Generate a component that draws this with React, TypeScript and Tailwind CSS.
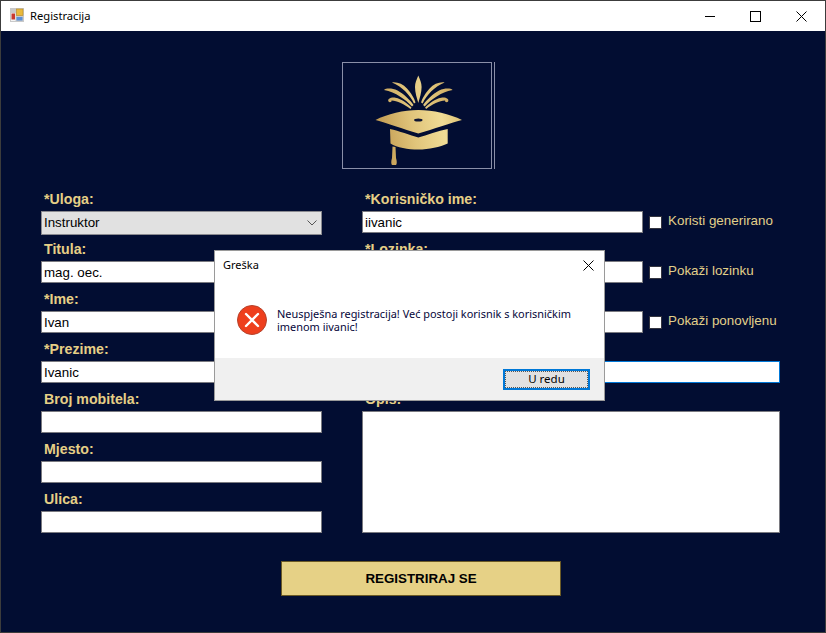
const LABEL = 'font-["Liberation_Sans",Arial,sans-serif] text-[14.2px] font-bold text-[#e6cf86] leading-none';
const UI_FONT = 'font-["Noto_Sans",sans-serif]';
const INPUT =
	'block h-[22px] border border-[#7a7a80] bg-white px-[2px] font-["Liberation_Sans",Arial,sans-serif] text-[13.33px] text-black outline-none';

function Field({ label, children, tall }: { label?: string; children: React.ReactNode; tall?: boolean }) {
	return (
		<div className={tall ? 'h-[150px]' : 'h-[50px]'}>
			<div className={`flex h-[25px] items-center pl-[3px] pt-[2px] ${LABEL}`}>{label}</div>
			{children}
		</div>
	);
}

function TextInput({ value, className = 'w-[281px]' }: { value?: string; className?: string }) {
	return <input readOnly value={value ?? ''} className={`${INPUT} ${className}`} />;
}

function CheckRow({ label, value }: { label: string; value?: string }) {
	return (
		<div className="flex h-[22px] items-center">
			<TextInput value={value} />
			<span className="ml-[6px] h-[13px] w-[13px] border border-[#33343f] bg-white" />
			<span className='ml-[6px] -mt-[2px] font-["Liberation_Sans",Arial,sans-serif] text-[13.4px] text-[#e2d08a]'>{label}</span>
		</div>
	);
}

function AppIcon() {
	return (
		<svg width="14" height="14" viewBox="0 0 14 14" className="-mt-[2px]">
			<rect width="14" height="14" fill="#c9c9c9" />
			<rect x="1" y="5" width="4.5" height="8" fill="#f4f4f4" />
			<rect x="1.5" y="5.5" width="3.5" height="6" fill="#c8392f" />
			<rect x="6.5" y="1" width="6.5" height="6.5" fill="#e9b93c" stroke="#b98a22" strokeWidth="0.6" />
			<rect x="6.5" y="9" width="6" height="3.5" fill="#5b8fd6" />
		</svg>
	);
}

function WindowButtons() {
	return (
		<div className="flex items-center">
			<svg width="10" height="11" viewBox="0 0 10 11" className="mr-[35px]">
				<path d="M0 5.5h10" stroke="#000" strokeWidth="1" />
			</svg>
			<svg width="11" height="11" viewBox="0 0 11 11" className="mr-[35px]">
				<rect x="0.5" y="0.5" width="10" height="10" fill="none" stroke="#000" />
			</svg>
			<svg width="11" height="11" viewBox="0 0 11 11" className="mr-[18px]">
				<path d="M0.5 0.5l10 10M10.5 0.5l-10 10" stroke="#000" />
			</svg>
		</div>
	);
}

function CapLogo() {
	const feathers = (
		<>
			<path d="M72 41.5 C68 33 60 24.5 50 20.5 C55 19.8 61 22 65 26.5 C69 31 72.5 36.5 73.5 40.5 Z" />
			<path d="M70 44.5 C63 37 54 30.5 42 28 C44 26 50 26 55.5 28.5 C62 32 68 38 71.5 43 Z" />
			<path d="M68.5 47 C62.5 42.5 55 38.5 49.5 38.5 C50 40 47.5 41 46.5 39.5 C45 37 49 35 53.5 35.8 C59.5 37 65.5 41.5 69.5 45.5 Z" />
		</>
	);
	return (
		<svg width="148" height="104" viewBox="1 1 148 104">
			<defs>
				<linearGradient id="gold" gradientUnits="userSpaceOnUse" x1="34" y1="60" x2="120" y2="45">
					<stop offset="0" stopColor="#c29b52" />
					<stop offset="0.4" stopColor="#e0c47a" />
					<stop offset="0.75" stopColor="#f0dc96" />
					<stop offset="1" stopColor="#dcc072" />
				</linearGradient>
			</defs>
			<g fill="url(#gold)">
				<path d="M76.3 13.5 C78 17.5 79.6 21 79.6 25 C79.6 31 77.6 36 76.3 41 C75 36 73 31 73 25 C73 21 74.6 17.5 76.3 13.5 Z" />
				{feathers}
				<g transform="matrix(-1 0 0 1 152.6 0)">{feathers}</g>
				<path d="M33.5 58 C45 52 62 48 76.3 48 C91 48 108 52 120 58 C108 61 92 67 76.3 71.5 C61 67 45 61 33.5 58 Z" />
				<path d="M48 67 C57 69 68 73 76.3 75.5 C85 73 96 69 105.7 67 L105.7 81.5 C98 85 87 87.5 76.3 87.5 C66 87.5 55 85.5 48.5 81.5 Z" />
				<path d="M50.5 84.5 L53.5 85 L54 96 C55 99 55 102 54 103 L50 103 C49 102 49 99 50 96 Z" />
			</g>
			<ellipse cx="76.3" cy="58" rx="4.2" ry="1.5" fill="#0c1435" />
		</svg>
	);
}

function ErrorDialog() {
	return (
		<div className={`absolute left-[213px] top-[249px] flex h-[151px] w-[391px] flex-col border border-[#9a9a9a] bg-white ${UI_FONT}`}>
			<div className="flex h-[29px] items-center justify-between pl-[8px] pr-[10px] text-[11px] text-black">
				<span>Greška</span>
				<svg width="11" height="11" viewBox="0 0 11 11">
					<path d="M0.5 0.5l10 10M10.5 0.5l-10 10" stroke="#000" />
				</svg>
			</div>
			<div className="flex h-[78px] items-center pl-[22px]">
				<svg width="30" height="30" viewBox="0 0 30 30" className="mt-[2px] shrink-0">
					<circle cx="15" cy="15" r="14.5" fill="#ee3f1d" stroke="#b5432c" />
					<path d="M9 9l12 12M21 9L9 21" stroke="#fff" strokeWidth="2.4" strokeLinecap="round" />
				</svg>
				<p className="ml-[10px] mt-[2px] w-[320px] text-[10.95px] leading-[13px] text-[#06063a]">
					Neuspješna registracija! Već postoji korisnik s korisničkim imenom iivanic!
				</p>
			</div>
			<div className="flex flex-1 items-center justify-end bg-[#f0f0f0] pr-[14px]">
				<div className="flex h-[21px] w-[87px] items-center justify-center border-2 border-[#0078d7] bg-[#e1e1e1] text-[11.5px] text-black outline-1 -outline-offset-3 outline-dotted outline-[#555]">
					U redu
				</div>
			</div>
		</div>
	);
}

export default function App() {
	return (
		<div className="relative flex h-[633px] w-[826px] flex-col overflow-hidden border border-[#3c3c3c] bg-[#020d32]">
			<div className={`flex h-[30px] items-center justify-between bg-white pl-[9px] ${UI_FONT}`}>
				<div className="flex items-center gap-[6px] text-[11.2px] text-black">
					<AppIcon />
					<span>Registracija</span>
				</div>
				<WindowButtons />
			</div>

			<div className="mt-[31px] flex pl-[341px]">
				<div className="h-[107px] w-[150px] border border-[#8a8fa8]">
					<CapLogo />
				</div>
				<div className="ml-[2px] h-[107px] w-[2px] border-l border-[#8a8fa8]" />
			</div>

			<div className="mt-[17px] flex pl-[40px]">
				<div className="w-[281px]">
					<Field label="*Uloga:">
						<div className='flex h-[24px] w-[281px] items-center justify-between border border-[#8a8a90] bg-[#e1e1e1] pl-[2px] pr-[4px] font-["Liberation_Sans",Arial,sans-serif] text-[13.33px] text-black'>
							<span>Instruktor</span>
							<svg width="10" height="6" viewBox="0 0 10 6">
								<path d="M0.5 0.5L5 5l4.5-4.5" fill="none" stroke="#555" />
							</svg>
						</div>
					</Field>
					<Field label="Titula:">
						<TextInput value="mag. oec." />
					</Field>
					<Field label="*Ime:">
						<TextInput value="Ivan" />
					</Field>
					<Field label="*Prezime:">
						<TextInput value="Ivanic" />
					</Field>
					<Field label="Broj mobitela:">
						<TextInput />
					</Field>
					<Field label="Mjesto:">
						<TextInput />
					</Field>
					<Field label="Ulica:">
						<TextInput />
					</Field>
				</div>

				<div className="ml-[40px] w-[418px]">
					<Field label="*Korisničko ime:">
						<CheckRow value="iivanic" label="Koristi generirano" />
					</Field>
					<Field label="*Lozinka:">
						<CheckRow label="Pokaži lozinku" />
					</Field>
					<Field>
						<CheckRow label="Pokaži ponovljenu" />
					</Field>
					<Field>
						<TextInput className="w-[418px] border-[#0078d7]" />
					</Field>
					<Field label="Opis:" tall>
						<textarea readOnly className="block h-[122px] w-[418px] resize-none border border-[#7a7a80] bg-white outline-none" />
					</Field>
				</div>
			</div>

			<div className="mt-[25px] flex pl-[280px]">
				<div className='flex h-[35px] w-[280px] items-center justify-center border border-[#6b5a25] bg-[#e6d186] font-["Liberation_Sans",Arial,sans-serif] text-[13.33px] font-bold text-black'>
					REGISTRIRAJ SE
				</div>
			</div>

			<ErrorDialog />
		</div>
	);
}
